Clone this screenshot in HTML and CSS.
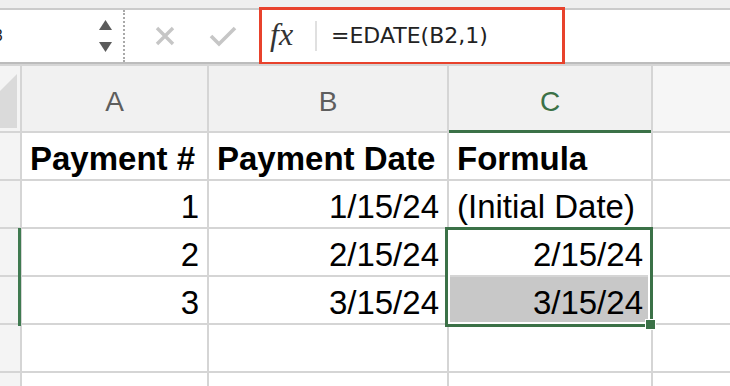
FILE: index.html
```html
<!DOCTYPE html>
<html>
<head>
<meta charset="utf-8">
<link rel="stylesheet" href="styles.css">
</head>
<body>
<div class="app">
  <div class="topstrip"></div>
  <div class="bar">
    <div class="namebox">
      <span class="nametext">B3</span>
      <svg class="stepper" width="16" height="36" viewBox="0 0 16 36">
        <polygon points="1,12 14,12 7.5,2" fill="#5b5b5b"/>
        <polygon points="1,24 14,24 7.5,34" fill="#5b5b5b"/>
      </svg>
    </div>
    <div class="actions">
      <svg class="icon-x" width="20" height="20" viewBox="0 0 20 20">
        <path d="M2 2 L18 18 M18 2 L2 18" stroke="#c6c6c6" stroke-width="3.4" fill="none"/>
      </svg>
      <svg class="icon-check" width="28" height="22" viewBox="0 0 28 22">
        <path d="M2 11 L10 19 L26 3" stroke="#c6c6c6" stroke-width="3.6" fill="none"/>
      </svg>
    </div>
    <div class="formula">
      <span class="fx">fx</span>
      <span class="sep"></span>
      <span class="ftext">=EDATE(B2,1)</span>
    </div>
    <div class="highlight"></div>
  </div>
  <div class="sheet">
    <div class="corner">
      <svg width="20" height="65" viewBox="0 0 20 65">
        <polygon points="17,8 17,62 -37,62" fill="#dadada"/>
      </svg>
    </div>
    <div class="colhdr">A</div>
    <div class="colhdr">B</div>
    <div class="colhdr active">C</div>
    <div class="colhdr light"></div>

    <div class="rowhdr"></div>
    <div class="cell bold">Payment #</div>
    <div class="cell bold">Payment Date</div>
    <div class="cell bold">Formula</div>
    <div class="cell"></div>

    <div class="rowhdr"></div>
    <div class="cell num">1</div>
    <div class="cell num">1/15/24</div>
    <div class="cell">(Initial Date)</div>
    <div class="cell"></div>

    <div class="rowhdr"></div>
    <div class="cell num">2</div>
    <div class="cell num">2/15/24</div>
    <div class="cell num">2/15/24</div>
    <div class="cell"></div>

    <div class="rowhdr"></div>
    <div class="cell num">3</div>
    <div class="cell num">3/15/24</div>
    <div class="cell num picked">3/15/24</div>
    <div class="cell"></div>

    <div class="rowhdr"></div>
    <div class="cell"></div>
    <div class="cell"></div>
    <div class="cell"></div>
    <div class="cell"></div>

    <div class="rowhdr"></div>
    <div class="cell"></div>
    <div class="cell"></div>
    <div class="cell"></div>
    <div class="cell"></div>

    <div class="rowmark"></div>
    <div class="selection"></div>
    <div class="handle"></div>
  </div>
</div>
</body>
</html>
```

FILE: styles.css
```css
html, body {
  margin: 0;
  padding: 0;
  background: #ffffff;
}
.app {
  width: 730px;
  height: 386px;
  overflow: hidden;
  font-family: "Liberation Sans", Arial, sans-serif;
}
.topstrip {
  height: 8px;
  background: #efefef;
  border-bottom: 2px solid #cbcbcb;
}
.bar {
  position: relative;
  height: 52px;
  display: flex;
  align-items: stretch;
  background: #ffffff;
  border-bottom: 2px solid #bcbcbc;
}
.namebox {
  width: 123px;
  border-right: 2px dotted #a9a9a9;
  display: flex;
  align-items: center;
  justify-content: space-between;
  overflow: hidden;
}
.nametext {
  font-size: 16px;
  color: #222;
  margin-left: -17px;
}
.stepper {
  margin-right: 9px;
}
.actions {
  width: 134px;
  display: flex;
  align-items: center;
  padding-left: 30px;
  box-sizing: border-box;
}
.icon-check {
  margin-left: 34px;
}
.formula {
  flex: 1;
  display: flex;
  align-items: center;
  padding-left: 11px;
}
.fx {
  font-family: "Liberation Serif", "Times New Roman", serif;
  font-style: italic;
  font-size: 32px;
  color: #333;
  width: 45px;
  margin-top: -3px;
}
.sep {
  width: 2px;
  height: 30px;
  background: #e0e0e0;
}
.ftext {
  font-family: "DejaVu Sans", sans-serif;
  font-size: 22px;
  color: #222;
  margin-left: 14px;
  margin-top: -2px;
}
.highlight {
  position: absolute;
  left: 259px;
  top: -3px;
  width: 300px;
  height: 52px;
  border: 3px solid #e8422c;
}
.sheet {
  position: relative;
  display: grid;
  grid-template-columns: 20px 185px 238px 202px 1fr;
  grid-template-rows: 65px 46px 46px 46px 46px 46px 46px;
  gap: 2px;
  padding-top: 2px;
  background: #d5d5d5;
}
.corner {
  background: #f4f4f4;
  overflow: hidden;
}
.corner svg {
  display: block;
}
.colhdr {
  background: #f1f1f1;
  color: #5e5e5e;
  font-size: 28px;
  display: flex;
  align-items: center;
  justify-content: center;
  padding-top: 7px;
  box-sizing: border-box;
}
.colhdr.active {
  color: #3b7147;
  box-shadow: 0 2px 0 #3b7147, inset 0 -1px 0 #3b7147;
  position: relative;
  z-index: 1;
}
.colhdr.light {
  background: #f6f6f6;
}
.rowhdr {
  background: #f4f4f4;
}
.cell {
  background: #ffffff;
  font-size: 33px;
  color: #000;
  padding: 6px 8px 0 8px;
  line-height: 40px;
  white-space: nowrap;
  overflow: hidden;
}
.cell.bold {
  font-weight: bold;
}
.cell.num {
  text-align: right;
}
.cell.picked {
  background: #c8c8c8;
}
.rowmark {
  position: absolute;
  left: 18px;
  top: 164px;
  width: 3px;
  height: 98px;
  background: #3f7a50;
}
.selection {
  position: absolute;
  left: 445px;
  top: 163px;
  width: 202px;
  height: 94px;
  border: 3px solid #3b7147;
  box-shadow: inset 0 0 0 2px #ffffff;
}
.handle {
  position: absolute;
  left: 645px;
  top: 255px;
  width: 9px;
  height: 9px;
  background: #3b7147;
  border: 1px solid #ffffff;
}
```
